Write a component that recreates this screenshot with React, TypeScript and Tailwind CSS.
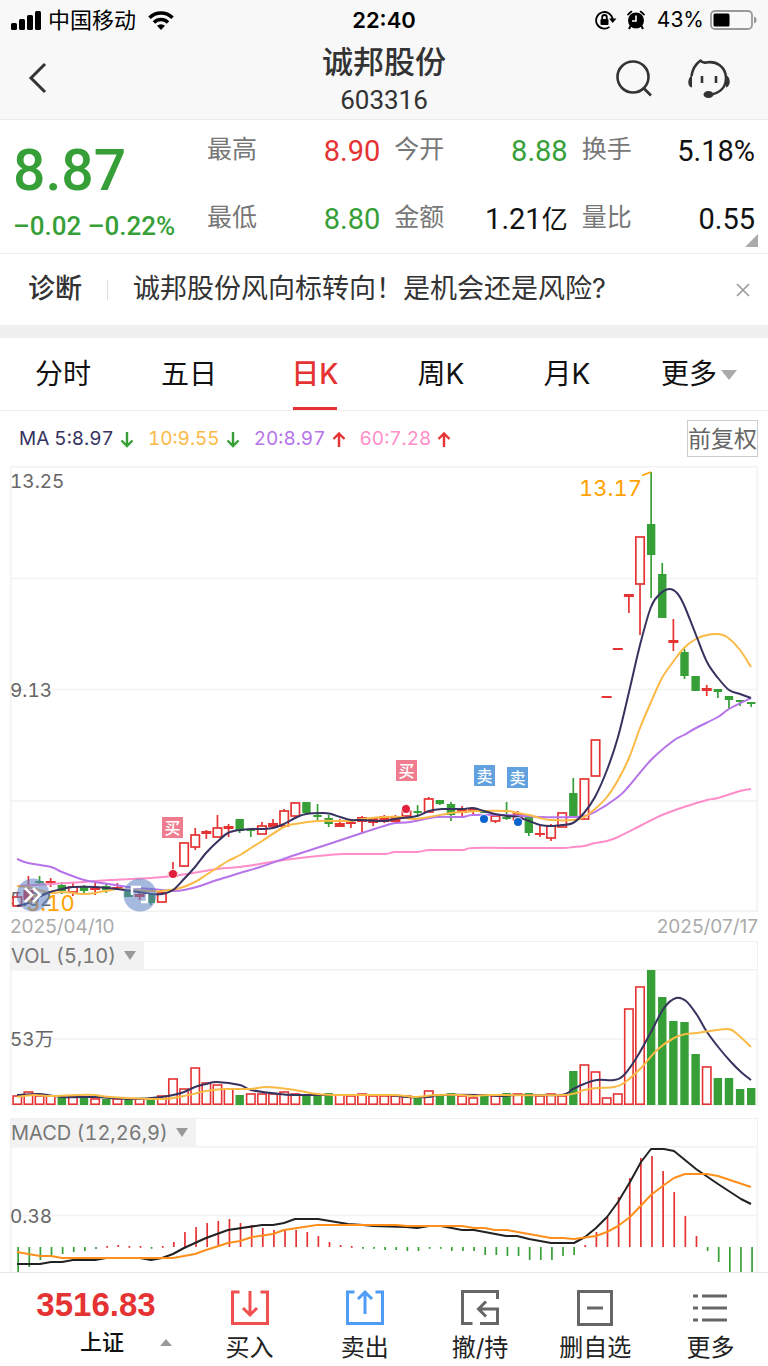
import type { ReactNode } from 'react';

const RED = '#e53333';
const GREEN = '#379f37';
const NAVY = '#37335f';
const YELLOW = '#fbba45';
const PURPLE = '#b673ea';
const PINK = '#ff8ec8';
const GRID = '#f2f2f2';

const STEP = 11.12;
const FIRST_X = 7.3;

type Point = [number, number];

// kind: h = hollow red, r = solid red, g = solid green
// [kind, body top, body bottom, high, low]
type Candle = ['h' | 'r' | 'g', number, number, number, number];

const candles: Candle[] = [
  ['h', 431, 440, 426, 440],
  ['r', 424, 434, 410, 437],
  ['g', 415, 417, 410, 419],
  ['r', 415, 417, 412, 421],
  ['g', 419, 425, 416, 428],
  ['h', 421, 426, 417, 430],
  ['g', 421, 425, 419, 427],
  ['r', 422, 424, 417, 429],
  ['g', 420, 424, 418, 427],
  ['r', 421, 423, 417, 423],
  ['g', 424, 431, 424, 431],
  ['r', 428, 431, 426, 434],
  ['g', 428, 437, 428, 439],
  ['h', 427, 436, 424, 436],
  ['h', 407, 410, 396, 410],
  ['h', 377, 400, 377, 401],
  ['h', 369, 381, 362, 384],
  ['r', 365, 368, 364, 373],
  ['h', 362, 371, 349, 371],
  ['r', 360, 363, 358, 371],
  ['g', 353, 365, 353, 367],
  ['g', 363, 365, 363, 371],
  ['h', 360, 368, 356, 368],
  ['r', 357, 361, 353, 361],
  ['h', 345, 360, 343, 360],
  ['h', 337, 350, 337, 352],
  ['g', 336, 347, 336, 349],
  ['g', 349, 351, 338, 354],
  ['g', 352, 358, 349, 361],
  ['r', 357, 361, 353, 361],
  ['r', 356, 358, 353, 362],
  ['r', 351, 356, 350, 366],
  ['r', 352, 357, 352, 360],
  ['r', 350, 356, 349, 357],
  ['r', 351, 356, 349, 356],
  ['h', 345, 350, 338, 350],
  ['g', 345, 347, 339, 351],
  ['h', 333, 346, 331, 346],
  ['g', 334, 338, 334, 339],
  ['g', 338, 349, 336, 355],
  ['r', 343, 347, 340, 350],
  ['r', 343, 346, 342, 349],
  ['g', 344, 347, 344, 347],
  ['h', 350, 355, 350, 357],
  ['g', 351, 353, 336, 354],
  ['h', 348, 354, 345, 354],
  ['g', 351, 367, 351, 370],
  ['r', 367, 369, 360, 371],
  ['h', 360, 372, 358, 375],
  ['h', 347, 361, 347, 361],
  ['g', 327, 350, 312, 352],
  ['h', 313, 353, 313, 354],
  ['h', 274, 310, 274, 310],
  ['r', 230, 232, 230, 232],
  ['r', 182, 184, 182, 184],
  ['r', 128, 131, 128, 147],
  ['h', 71, 118, 71, 169],
  ['g', 58, 89, 6, 132],
  ['g', 108, 152, 97, 152],
  ['r', 174, 177, 153, 185],
  ['g', 186, 210, 183, 213],
  ['g', 210, 225, 210, 225],
  ['r', 222, 225, 219, 230],
  ['g', 223, 226, 223, 232],
  ['g', 230, 234, 230, 243],
  ['g', 234, 236, 234, 240],
  ['g', 236, 238, 236, 241],
];

const ma5: Point[] = [
  [7, 440], [18, 437], [29, 431], [40, 426], [52, 423], [63, 421], [85, 421], [107, 423], [129, 426], [141, 428],
  [152, 428], [163, 424], [174, 413], [185, 401], [196, 387], [207, 376], [218, 367], [230, 364], [241, 363],
  [252, 363], [263, 362], [274, 358], [285, 352], [296, 348], [313, 347], [321, 348], [330, 351], [341, 354],
  [352, 354], [374, 355], [385, 353], [407, 350], [419, 345], [432, 343], [452, 343], [463, 342], [474, 345],
  [485, 348], [497, 350], [508, 351], [519, 355], [530, 359], [541, 360], [552, 359], [563, 357], [574, 347],
  [585, 331], [597, 304], [608, 271], [619, 226], [630, 179], [641, 141], [650, 128], [659, 123], [667, 127],
  [674, 139], [686, 169], [697, 196], [708, 212], [719, 224], [730, 228], [741, 232],
];
const ma10: Point[] = [
  [7, 420], [18, 421], [29, 424], [41, 427], [52, 426], [63, 427], [74, 428], [85, 427], [107, 423], [118, 424],
  [141, 425], [152, 425], [170, 422], [185, 416], [196, 409], [207, 402], [218, 395], [230, 389], [241, 382],
  [252, 375], [274, 361], [285, 358], [308, 355], [330, 355], [341, 355], [352, 353], [374, 351], [390, 351],
  [402, 353], [419, 351], [441, 347], [452, 346], [467, 345], [497, 345], [508, 347], [519, 349], [530, 352],
  [541, 354], [563, 354], [574, 351], [585, 343], [597, 331], [608, 314], [619, 292], [630, 262], [641, 236],
  [652, 212], [663, 196], [674, 182], [686, 173], [697, 169], [707, 168], [717, 171], [730, 184], [741, 201],
];
const ma20: Point[] = [
  [7, 393], [18, 397], [41, 401], [52, 406], [74, 414], [85, 416], [118, 421], [141, 423], [163, 425],
  [174, 424], [190, 420], [207, 414], [230, 407], [250, 401], [285, 389], [319, 378], [352, 367], [374, 360],
  [385, 357], [400, 356], [427, 351], [452, 351], [463, 349], [497, 349], [530, 351], [563, 351], [574, 350],
  [585, 346], [608, 331], [619, 320], [641, 294], [663, 275], [674, 269], [686, 262], [708, 251], [719, 243],
  [741, 232],
];
const ma60: Point[] = [
  [7, 420], [40, 418], [74, 416], [100, 414], [141, 412], [170, 409], [207, 403], [230, 401], [250, 398],
  [274, 394], [308, 390], [333, 388], [374, 388], [385, 386], [407, 386], [420, 384], [452, 384], [463, 382],
  [510, 382], [552, 382], [563, 381], [574, 380], [585, 377], [597, 375], [608, 371], [630, 360], [652, 349],
  [674, 341], [697, 334], [708, 332], [730, 325], [741, 323],
];

// positive = hollow red bar, negative = solid green bar
const volumes = [
  9, 13, 9, 9, -8, 8, -8, 6, -6, 6, -6, 6, -6, 9, 26, 16, 37, 22, 20, 16, -10, 11, 11, 11, 13, 11, -11, -11, -12,
  10, 9, 11, 9, 9, 9, 9, -8, 14, -10, -12, 9, 7, -11, 9, -12, 11, -12, 9, 11, 9, -34, 40, 33, 7, 11, 96, 118, -135,
  -108, -84, -83, -51, 38, -27, -27, -16, -17,
];
const volMa5: Point[] = [
  [7, 126], [30, 125], [52, 128], [85, 128], [100, 129], [123, 130], [152, 128], [163, 126], [174, 123], [185, 118],
  [196, 115], [207, 113], [230, 116], [241, 121], [270, 125], [290, 126], [374, 126], [396, 128], [419, 128],
  [430, 126], [474, 126], [491, 127], [507, 126], [551, 126], [563, 120], [574, 115], [587, 111], [604, 111],
  [614, 106], [627, 88], [641, 63], [654, 39], [666, 29], [676, 32], [687, 46], [697, 63], [709, 79], [721, 93],
  [731, 103], [741, 111],
];
const volMa10: Point[] = [
  [7, 128], [23, 126], [41, 127], [67, 126], [85, 126], [100, 128], [152, 130], [174, 127], [196, 122], [213, 120],
  [240, 120], [257, 118], [285, 121], [300, 124], [323, 126], [384, 126], [404, 128], [427, 126], [451, 126],
  [463, 127], [481, 126], [554, 126], [574, 121], [587, 119], [604, 118], [614, 114], [631, 99], [647, 81],
  [664, 69], [676, 65], [687, 64], [717, 60], [727, 65], [741, 78],
];

const macdBars = [
  -26, -20, -13, -9, -7, -5, -4, -2, 1, 2, 1, 1, -1, 1, 5, 15, 20, 24, 26, 28, 24, 22, 19, 17, 17, 17, 15, 11, 5, 2,
  1, -1, -1, -3, -3, -4, -4, -1, -1, -4, -4, -4, -8, -8, -9, -9, -13, -13, -13, -9, -8, 2, 15, 30, 50, 69, 89, 91,
  76, 55, 31, 11, -4, -15, -25, -26, -26,
];
const dif: Point[] = [
  [7, 118], [30, 118], [41, 116], [52, 116], [63, 114], [85, 114], [96, 112], [130, 112], [141, 114], [152, 112],
  [163, 108], [174, 102], [196, 92], [218, 84], [252, 79], [263, 79], [274, 77], [285, 73], [308, 73], [338, 78],
  [353, 79], [363, 80], [396, 81], [407, 82], [419, 80], [431, 80], [452, 84], [464, 84], [496, 90], [507, 90],
  [519, 93], [541, 97], [564, 97], [575, 91], [586, 82], [597, 71], [608, 56], [620, 36], [631, 16], [641, 3],
  [654, 3], [664, 5], [675, 14], [686, 23], [708, 38], [731, 53], [741, 58],
];
const dea: Point[] = [
  [7, 106], [30, 110], [41, 110], [52, 112], [163, 112], [185, 108], [196, 104], [218, 97], [230, 95], [242, 91],
  [263, 88], [274, 84], [307, 79], [386, 79], [397, 80], [452, 80], [464, 82], [474, 82], [485, 84], [497, 84],
  [541, 92], [553, 92], [564, 93], [586, 90], [597, 86], [608, 80], [620, 71], [641, 49], [654, 39], [664, 32],
  [675, 28], [697, 28], [708, 30], [741, 41],
];

const straight = (pts: Point[]) => 'M' + pts.map((p) => p.join(' ')).join('L');

// smooth line through every point
const curve = (pts: Point[]) => {
  let d = `M${pts[0][0]} ${pts[0][1]}`;
  for (let i = 0; i < pts.length - 1; i++) {
    const p0 = pts[i - 1] ?? pts[i];
    const p1 = pts[i];
    const p2 = pts[i + 1];
    const p3 = pts[i + 2] ?? p2;
    d += `C${p1[0] + (p2[0] - p0[0]) / 6} ${p1[1] + (p2[1] - p0[1]) / 6} ${p2[0] - (p3[0] - p1[0]) / 6} ${
      p2[1] - (p3[1] - p1[1]) / 6
    } ${p2[0]} ${p2[1]}`;
  }
  return d;
};

function Line({ d, color, width = 2 }: { d: string; color: string; width?: number }) {
  return <path d={d} fill="none" stroke={color} strokeWidth={width} strokeLinejoin="round" />;
}

function Frame({ height, lines }: { height: number; lines: number[] }) {
  return (
    <g stroke={GRID} strokeWidth="1.5">
      <path d={`M.75 0V${height}M747.25 0V${height}`} />
      {lines.map((y) => (
        <path key={y} d={`M0 ${y}H748`} />
      ))}
    </g>
  );
}

function AxisLabel({ y, children }: { y: number; children: ReactNode }) {
  return (
    <text x="0" y={y} className="fill-[#666] text-[19px] tabular-nums">
      {children}
    </text>
  );
}

function TradeMark({ x, y, dotX, dotY, side }: { x: number; y: number; dotX: number; dotY: number; side: 'buy' | 'sell' }) {
  const buy = side === 'buy';
  return (
    <g>
      <circle cx={dotX} cy={dotY} r="5" fill="#fff" opacity="0.8" />
      <circle cx={dotX} cy={dotY} r="4" fill={buy ? '#e0203c' : '#0a62cc'} />
      <rect x={x} y={y} width="21" height="21" fill={buy ? '#ef7d8f' : '#62a1e0'} />
      <text x={x + 10.5} y={y + 16.5} textAnchor="middle" className="fill-white text-[16px] font-medium">
        {buy ? '买' : '卖'}
      </text>
    </g>
  );
}

function PriceChart() {
  return (
    <svg viewBox="0 0 748 446" className="block h-auto w-full overflow-visible">
      <Frame height={446} lines={[0.75, 112.5, 223.5, 335, 445.25]} />
      <AxisLabel y={22}>13.25</AxisLabel>
      <AxisLabel y={231}>9.13</AxisLabel>
      <AxisLabel y={440}>5.02</AxisLabel>
      {candles.map(([kind, top, bottom, high, low], i) => {
        const x = FIRST_X + i * STEP;
        const color = kind === 'g' ? GREEN : RED;
        return (
          <g key={i} stroke={color} strokeWidth="1.7">
            {high < top && <path d={`M${x} ${high}V${top}`} />}
            {low > bottom && <path d={`M${x} ${bottom}V${low}`} />}
            {kind === 'h' ? (
              <rect x={x - 4.2} y={top} width="8.4" height={bottom - top} fill="#fff" />
            ) : (
              <rect
                x={kind === 'g' ? x - 4.2 : x - 5}
                y={top}
                width={kind === 'g' ? 8.4 : 10}
                height={bottom - top}
                fill={color}
                stroke="none"
              />
            )}
          </g>
        );
      })}
      <Line d={curve(ma60)} color={PINK} />
      <Line d={curve(ma20)} color={PURPLE} />
      <Line d={curve(ma10)} color={YELLOW} />
      <Line d={curve(ma5)} color={NAVY} />
      <path d="M632 9.500L641 6" stroke="#ffa200" strokeWidth="1.8" />
      <text x="632" y="30" textAnchor="end" className="fill-[#ffa200] text-[22px] tabular-nums">13.17</text>
      <text x="16" y="445" className="fill-[#ffa200] text-[22px] tabular-nums">5.10</text>
      <TradeMark x={152} y={351} dotX={163} dotY={408} side="buy" />
      <TradeMark x={386} y={294} dotX={396} dotY={343} side="buy" />
      <TradeMark x={464} y={299} dotX={474} dotY={353} side="sell" />
      <TradeMark x={497} y={301} dotX={508} dotY={356} side="sell" />
      {/* range handles */}
      <circle cx="23" cy="429" r="16.500" fill="#5b7dc1" opacity="0.55" />
      <path d="M15 422l7 7-7 7M23 422l7 7-7 7" fill="none" stroke="#fff" strokeWidth="2.500" />
      <circle cx="130" cy="429" r="16.500" fill="#5b7dc1" opacity="0.55" />
      <path d="M122 429v-8h9M131 436h6v-8" fill="none" stroke="#fff" strokeWidth="2.500" />
    </svg>
  );
}

function VolumeChart() {
  return (
    <svg viewBox="0 0 748 137" className="block h-auto w-full">
      <Frame height={137} lines={[0.75, 70, 136]} />
      <AxisLabel y={77}>53万</AxisLabel>
      {volumes.map((v, i) => {
        const x = FIRST_X + i * STEP;
        return v > 0 ? (
          <rect key={i} x={x - 4.2} y={136 - v} width="8.4" height={v - 0.8} fill="#fff" stroke={RED} strokeWidth="1.6" />
        ) : (
          <rect key={i} x={x - 4.2} y={136 + v} width="8.4" height={-v} fill={GREEN} />
        );
      })}
      <Line d={curve(volMa5)} color={NAVY} />
      <Line d={curve(volMa10)} color={YELLOW} />
    </svg>
  );
}

function MacdChart() {
  return (
    <svg viewBox="0 0 748 126" className="block h-auto w-full">
      <Frame height={126} lines={[0.75, 69.5]} />
      <AxisLabel y={77}>0.38</AxisLabel>
      {macdBars.map((v, i) => (
        <rect
          key={i}
          x={FIRST_X + i * STEP}
          y={v > 0 ? 101 - v : 101}
          width="1.7"
          height={Math.max(Math.abs(v), 1.8)}
          fill={v > 0 ? RED : GREEN}
        />
      ))}
      <Line d={straight(dif)} color="#222" />
      <Line d={straight(dea)} color="#ff8f1c" />
    </svg>
  );
}

function Triangle({ className, up }: { className: string; up?: boolean }) {
  return (
    <svg viewBox="0 0 12 10" preserveAspectRatio="none" className={className} fill="currentColor">
      <path d={up ? 'M6 0l6 10H0z' : 'M0 0h12L6 10z'} />
    </svg>
  );
}

function IndicatorHead({ children }: { children: ReactNode }) {
  return (
    <div className="flex h-7 border border-b-0 border-[#f0f0f0]">
      <button className="flex items-center gap-2 bg-[#f2f2f2] pr-2 text-[20px] text-[#777] tabular-nums">
        {children}
        <Triangle className="h-[9px] w-3 text-[#999]" />
      </button>
    </div>
  );
}

function StatusBar() {
  return (
    <div className="flex h-10 items-center px-[11px] text-black">
      <div className="flex flex-1 items-center">
        <svg width="30" height="19" viewBox="0 0 30 19">
          <rect x="0" y="12" width="6" height="7" rx="1.500" />
          <rect x="8" y="8" width="6" height="11" rx="1.500" />
          <rect x="16" y="4" width="6" height="15" rx="1.500" />
          <rect x="24" y="0" width="6" height="19" rx="1.500" />
        </svg>
        <span className="ml-[7px] text-[22px]">中国移动</span>
        <svg width="26" height="19" viewBox="0 0 26 19" className="ml-3" fill="none" stroke="#000" strokeWidth="3.600">
          <path d="M1.500 6.800a16.200 16.200 0 0 1 23 0" />
          <path d="M6 11.400a9.900 9.900 0 0 1 14 0" />
          <path d="M13 19l-4-4.200a5.700 5.700 0 0 1 8 0z" fill="#000" stroke="none" />
        </svg>
      </div>
      <span className="text-[22px] font-semibold">22:40</span>
      <div className="flex flex-1 items-center justify-end">
        <svg width="22" height="20" viewBox="0 0 22 20" fill="none" stroke="#000" strokeWidth="1.800">
          <path d="M14.500 16.900A8.300 8.300 0 1 1 17.600 9" />
          <path d="M14 8.500h7.500L17.700 13z" fill="#000" stroke="none" />
          <rect x="5.500" y="9" width="8" height="6" rx="1" fill="#000" stroke="none" />
          <path d="M7.200 9.500V7.300a2.300 2.300 0 0 1 4.600 0v2.200" />
        </svg>
        <svg width="18" height="20" viewBox="0 0 18 20" className="ml-[10px]">
          <circle cx="9" cy="10.500" r="8" />
          <path d="M0 4.500A12 12 0 0 1 4.500.5l1 1.300L1 5.800zM18 4.500A12 12 0 0 0 13.500.5l-1 1.300L17 5.800z" />
          <path d="M3.500 16l-1.500 3M14.500 16l1.500 3" stroke="#000" strokeWidth="2" />
          <path d="M9 5.500v5.500H5" fill="none" stroke="#fff" strokeWidth="1.600" />
        </svg>
        <span className="ml-3 text-[21px]">43%</span>
        <svg width="47" height="20" viewBox="0 0 47 20" className="ml-[6px]">
          <rect x="1" y="1" width="41" height="18" rx="4" fill="none" stroke="#999" strokeWidth="1.800" />
          <rect x="3.500" y="3.500" width="16" height="13" rx="1.500" />
          <path d="M44 6.500c3.500 1 3.500 6 0 7z" fill="#999" />
        </svg>
      </div>
    </div>
  );
}

function Header() {
  return (
    <header className="border-b border-[#ececec] bg-[#f8f8f8]">
      <StatusBar />
      <div className="grid h-[79px] grid-cols-[1fr_auto_1fr] items-center text-[#333]">
        <button aria-label="返回" className="mb-1 ml-7 w-5">
          <svg width="20" height="32" viewBox="0 0 20 32" fill="none" stroke="currentColor" strokeWidth="3">
            <path d="M17 2L3 16l14 14" />
          </svg>
        </button>
        <div className="text-center">
          <h1 className="text-[31px] leading-[40px] font-medium">诚邦股份</h1>
          <p className="font-[Roboto] text-[26px] leading-[36px]">603316</p>
        </div>
        <div className="mr-[37px] mb-1 flex items-center justify-end gap-[34px]">
          <button aria-label="搜索">
            <svg width="38" height="38" viewBox="0 0 38 38" fill="none" stroke="currentColor" strokeWidth="2.600">
              <circle cx="18" cy="18" r="15.500" />
              <path d="M28 28.500l8 8" />
            </svg>
          </button>
          <button aria-label="客服">
            <svg width="44" height="40" viewBox="0 0 44 40" fill="none" stroke="currentColor" strokeWidth="2.600" strokeLinejoin="round">
              <path d="M4.500 18C5.500 11 8 6.500 13.500 2.500C15 4.500 16.500 5 19 4.500C30 2.500 38 9 39 19C39.500 29 33 35.500 22 37" />
              <path d="M15 18v7M29 18v7" />
              <path d="M5 17v12.500C0 29 0 20 5 17zM39 17v12.500c5-1.500 5-10 0-12.500z" fill="currentColor" stroke="none" />
              <ellipse cx="21.500" cy="36.500" rx="5" ry="3.500" fill="currentColor" stroke="none" />
            </svg>
          </button>
        </div>
      </div>
    </header>
  );
}

const quotes = [
  { label: '最高', value: '8.90', tone: 'text-[#e53333]' },
  { label: '今开', value: '8.88', tone: 'text-[#379f37]' },
  { label: '换手', value: '5.18%', tone: 'text-[#111]' },
  { label: '最低', value: '8.80', tone: 'text-[#379f37]' },
  { label: '金额', value: '1.21', unit: '亿', tone: 'text-[#111]' },
  { label: '量比', value: '0.55', tone: 'text-[#111]' },
];

function Quote() {
  return (
    <section className="relative flex h-[134px] border-b border-[#ececec] px-[13px]">
      <div className="w-[194px] shrink-0 font-[Roboto] font-medium whitespace-nowrap text-[#379f37]">
        <p className="mt-5 text-[57px] leading-[62px]">8.87</p>
        <p className="mt-2 text-[26px] leading-[32px]">–0.02 –0.22%</p>
      </div>
      <dl className="grid flex-1 grid-cols-3 grid-rows-[68px_66px] gap-x-[14px]">
        {quotes.map((q) => (
          <div key={q.label} className="flex justify-between pt-3 leading-[34px]">
            <dt className="text-[25px] text-[#777]">{q.label}</dt>
            <dd className={`pt-[2px] font-[Roboto,'Noto_Sans_CJK_SC',sans-serif] text-[29px] ${q.tone}`}>
              {q.value}
              {q.unit && <span className="text-[26px]">{q.unit}</span>}
            </dd>
          </div>
        ))}
      </dl>
      <svg width="13" height="13" viewBox="0 0 13 13" className="absolute right-[10px] bottom-[6px]">
        <path d="M13 0v13H0z" fill="#aaa" />
      </svg>
    </section>
  );
}

const tabs = ['分时', '五日', '日K', '周K', '月K'];

function Tabs() {
  return (
    <nav className="flex h-[73px] border-b border-[#ececec] text-[28px] text-[#111]">
      {tabs.map((t) => (
        <button
          key={t}
          className={t === '日K' ? 'flex flex-1 flex-col items-center font-medium text-[#e53333]' : 'flex flex-1 flex-col items-center'}
        >
          <span className="h-[69px] leading-[72px]">{t}</span>
          {t === '日K' && <span className="h-[3px] w-11 bg-[#e53333]" />}
        </button>
      ))}
      <button className="flex w-[138px] justify-center gap-1">
        <span className="leading-[72px]">更多</span>
        <Triangle className="mt-8 h-[10px] w-4 text-[#aaa]" />
      </button>
    </nav>
  );
}

const averages = [
  { text: 'MA 5:8.97', tone: 'text-[#37335f]', up: false },
  { text: '10:9.55', tone: 'text-[#fbba45]', up: false },
  { text: '20:8.97', tone: 'text-[#b673ea]', up: true },
  { text: '60:7.28', tone: 'text-[#ff8ec8]', up: true },
];

function Averages() {
  return (
    <div className="flex h-[55px] items-center justify-between pr-[10px] pl-[19px]">
      <div className="flex gap-[14px] pt-[2px] text-[19px] tabular-nums">
        {averages.map((a) => (
          <span key={a.text} className={`flex items-center gap-[6px] ${a.tone}`}>
            {a.text}
            <svg width="14" height="16" viewBox="0 0 14 16" fill="none" stroke={a.up ? RED : GREEN} strokeWidth="2.400">
              <path d={a.up ? 'M7 15V1.500M1.500 7L7 1.500 12.500 7' : 'M7 0v14M1.500 8.500L7 14l5.500-5.500'} />
            </svg>
          </span>
        ))}
      </div>
      <button className="h-[37px] border border-[#ccc] text-[23px] leading-[37px] text-[#666]">前复权</button>
    </div>
  );
}

function Action({ label, color, children }: { label: string; color: string; children: ReactNode }) {
  return (
    <button className="flex flex-1 flex-col items-center pt-4 text-[24px] text-[#222]">
      <svg width="40" height="38" viewBox="0 0 40 38" fill="none" stroke={color} strokeWidth="3">
        {children}
      </svg>
      <span className="mt-[5px] leading-[32px]">{label}</span>
    </button>
  );
}

function BottomBar() {
  return (
    <footer className="flex h-[94px] border-t border-[#e8e8e8] bg-white">
      <button className="relative flex w-1/4 flex-col items-center pt-4">
        <span className="font-['Liberation_Sans'] text-[33px] leading-[32px] font-bold text-[#e53333]">3516.83</span>
        <span className="ml-3 text-[22px] leading-[42px] font-medium text-[#111]">上证</span>
        <Triangle up className="absolute right-5 bottom-5 h-[7px] w-3 text-[#999]" />
      </button>
      <Action label="买入" color="#f05050">
        <path d="M9.500 3h-7v31.500h35V3h-7M20 2v24M13 19l7 7 7-7" />
      </Action>
      <Action label="卖出" color="#4f9cf5">
        <path d="M9.500 3h-7v31.500h35V3h-7M20 25V3M13 10l7-7 7 7" />
      </Action>
      <Action label="撤/持" color="#666">
        <path d="M37.500 10V2.500h-35v32h10M20 34.500h17.500V20H19M26 12.500L18.500 20l7.500 7.500" />
      </Action>
      <Action label="删自选" color="#666">
        <path d="M3.500 2.500h33v33h-33zM12 19h16" />
      </Action>
      <Action label="更多" color="#666">
        <path d="M3 7h5M12 7h25M3 19h5M12 19h25M3 31h5M12 31h25" />
      </Action>
    </footer>
  );
}

export default function App() {
  return (
    <main className="flex min-h-screen flex-col bg-white font-[Inter,'Noto_Sans_CJK_SC',sans-serif]">
      <Header />
      <Quote />
      <section className="flex h-[71px] items-center px-7 text-[27px] text-[#333]">
        <strong className="font-medium">诊断</strong>
        <span className="mx-[25px] h-5 w-px bg-[#ddd]" />
        <a href="#diagnosis" className="flex-1">诚邦股份风向标转向！是机会还是风险?</a>
        <button aria-label="关闭" className="-mr-[10px]">
          <svg width="14" height="14" viewBox="0 0 14 14" stroke="#999" strokeWidth="1.600">
            <path d="M1 1l12 12M13 1L1 13" />
          </svg>
        </button>
      </section>
      <div className="h-[13px] bg-[#f0f0f0]" />
      <Tabs />
      <Averages />
      <section className="mx-[10px]">
        <PriceChart />
        <div className="flex h-[29px] items-center justify-between pt-[2px] text-[19px] text-[#aaa]">
          <time>2025/04/10</time>
          <time>2025/07/17</time>
        </div>
        <IndicatorHead>VOL (5,10)</IndicatorHead>
        <VolumeChart />
        <div className="h-3" />
        <IndicatorHead>MACD (12,26,9)</IndicatorHead>
        <MacdChart />
      </section>
      <BottomBar />
    </main>
  );
}
